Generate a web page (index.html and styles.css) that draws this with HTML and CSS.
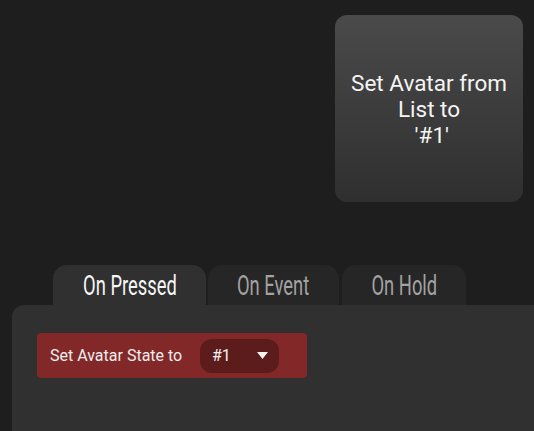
FILE: index.html
```html
<!DOCTYPE html>
<html>
<head>
<meta charset="utf-8">
<link rel="stylesheet" href="styles.css">
</head>
<body>
<div class="page">
  <div class="top">
    <div class="card">Set Avatar from List to<br>&nbsp;'#1'</div>
  </div>
  <div class="tabs">
    <div class="tab active"><span class="tab-text">On Pressed</span></div>
    <div class="tab"><span class="tab-text">On Event</span></div>
    <div class="tab"><span class="tab-text">On Hold</span></div>
  </div>
  <div class="panel">
    <div class="action">
      <span class="label">Set Avatar State to</span>
      <div class="select">
        <span>#1</span>
        <svg class="caret" width="11" height="8" viewBox="0 0 11 8"><path d="M0 0 L11 0 L5.5 7 Z" fill="#f2f2f2"/></svg>
      </div>
    </div>
  </div>
</div>
</body>
</html>
```
FILE: styles.css
```css
html, body {
  margin: 0;
  padding: 0;
  background: #1e1e1e;
  height: 100%;
  overflow: hidden;
}
.page {
  display: flex;
  flex-direction: column;
  height: 431px;
  font-family: Roboto, "Liberation Sans", sans-serif;
}
.top {
  display: flex;
  justify-content: flex-end;
  padding: 15px 11px 0 0;
  height: 250px;
  box-sizing: border-box;
}
.card {
  width: 188px;
  height: 187px;
  border-radius: 12px;
  background: linear-gradient(to bottom, #4a4a4a, #2f2f2f);
  color: #f4f4f4;
  font-size: 22.5px;
  line-height: 26px;
  text-align: center;
  display: flex;
  align-items: center;
  justify-content: center;
  padding: 0 8px;
  box-sizing: border-box;
}
.tabs {
  display: flex;
  gap: 2px;
  padding: 15px 0 0 53px;
}
.tab {
  height: 40px;
  border-radius: 14px 14px 0 0;
  background: #262626;
  color: #a3a3a3;
  font-size: 27px;
  display: flex;
  align-items: center;
  justify-content: center;
  padding-top: 2px;
  box-sizing: border-box;
  overflow: hidden;
}
.tab-text {
  display: inline-block;
  transform: scaleX(0.68);
  white-space: nowrap;
}
.tab:nth-child(1) { width: 153px; }
.tab:nth-child(2) { width: 131px; }
.tab:nth-child(3) { width: 124px; margin-left: 1px; }
.tab.active {
  background: #303030;
  color: #f6f6f6;
}
.panel {
  flex: 1;
  margin-left: 12px;
  background: #303030;
  border-radius: 12px 0 0 0;
  padding: 28px 0 0 25px;
}
.action {
  display: inline-flex;
  align-items: center;
  width: 270px;
  height: 45px;
  box-sizing: border-box;
  background: #822828;
  border-radius: 4px;
  padding-left: 13px;
}
.label {
  color: #eeeeee;
  font-size: 16px;
  width: 150px;
}
.select {
  width: 79px;
  height: 34px;
  border-radius: 12px;
  background: #5c1c1c;
  display: flex;
  align-items: center;
  justify-content: space-between;
  padding: 0 11px 0 12px;
  box-sizing: border-box;
  color: #f2f2f2;
  font-size: 16px;
}
.caret { display: block; }
```
